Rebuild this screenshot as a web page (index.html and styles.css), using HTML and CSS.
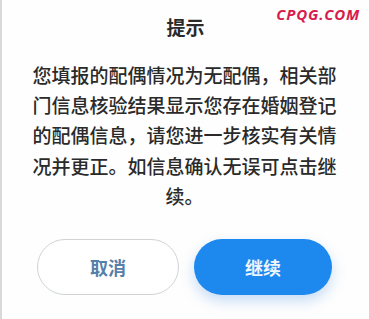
FILE: index.html
```html
<!DOCTYPE html>
<html lang="zh">
<head>
<meta charset="utf-8">
<link rel="stylesheet" href="styles.css">
</head>
<body>
<div class="dialog">
  <div class="watermark">CPQG.COM</div>
  <h1 class="title">提示</h1>
  <p class="message">您填报的配偶情况为无配偶，相关部门信息核验结果显示您存在婚姻登记的配偶信息，请您进一步核实有关情况并更正。如信息确认无误可点击继续。</p>
  <div class="actions">
    <button class="btn btn-cancel">取消</button>
    <button class="btn btn-ok">继续</button>
  </div>
</div>
</body>
</html>
```
FILE: styles.css
```css
html, body {
  margin: 0;
  padding: 0;
  background: #ffffff;
}
body {
  width: 369px;
  height: 319px;
  overflow: hidden;
  font-family: "Noto Sans CJK SC", "Noto Sans", sans-serif;
}
.dialog {
  position: relative;
  box-sizing: border-box;
  width: 369px;
  height: 319px;
  border-left: 2px solid #d9d9d9;
  background: #fefefe;
  display: flex;
  flex-direction: column;
  align-items: center;
}
.watermark {
  position: absolute;
  top: 4px;
  right: 9px;
  font-family: "Open Sans", "Liberation Sans", sans-serif;
  font-style: italic;
  font-weight: bold;
  font-size: 15px;
  letter-spacing: 0.8px;
  color: #d81a4d;
}
.title {
  margin: 15px 0 0 0;
  font-size: 19px;
  line-height: 24px;
  font-weight: 700;
  color: #2a2a2a;
}
.message {
  margin: 21px 0 0 -2px;
  width: 304px;
  font-size: 19px;
  line-height: 30.2px;
  font-weight: 500;
  color: #2a2a2a;
  text-align: center;
}
.actions {
  margin-top: 28px;
  display: flex;
  gap: 15px;
  margin-left: -2px;
}
.btn {
  box-sizing: border-box;
  height: 56px;
  border-radius: 28px;
  font-family: "Noto Sans CJK SC", sans-serif;
  font-size: 18px;
  font-weight: 700;
  padding: 0;
}
.btn-cancel {
  width: 142px;
  background: #ffffff;
  border: 1.5px solid #cfd3d6;
  color: #5580a8;
}
.btn-ok {
  width: 138px;
  background: #1d88ee;
  border: none;
  color: #eef6ff;
  box-shadow: 0 6px 14px rgba(30, 120, 220, 0.25);
}
```
